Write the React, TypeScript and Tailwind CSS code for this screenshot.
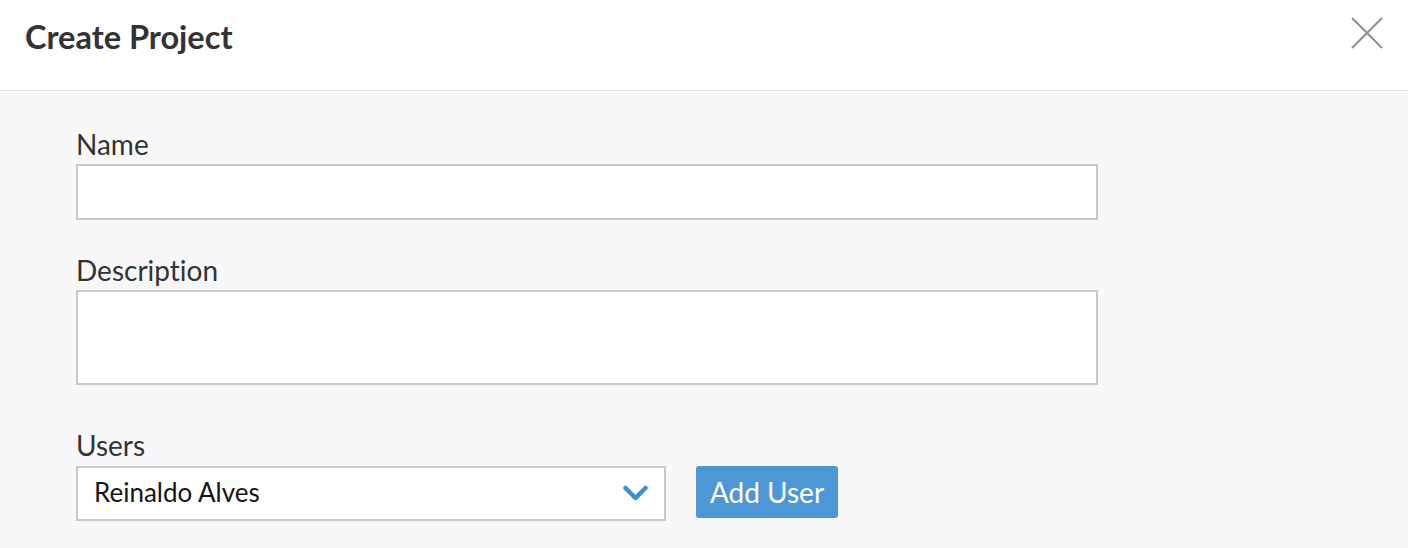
export default function App() {
  return (
    <div
      className="w-[1408px] h-[548px] overflow-hidden bg-[#f8f8fa] [font-variant-ligatures:none]"
      style={{ fontFamily: "Lato, 'Open Sans', sans-serif" }}
    >
      {/* Header */}
      <div className="h-[91px] bg-white border-b border-[#e4e4e6] flex items-start justify-between pl-[25px] pr-[25px]">
        <h1 className="mt-[18px] text-[32.5px] leading-[38px] font-bold text-[#333333]">
          Create Project
        </h1>
        <button type="button" className="mt-[17px] text-[#8e8e93]">
          <svg width="32" height="32" viewBox="0 0 32 32" fill="none">
            <path d="M1 1L31 31M31 1L1 31" stroke="currentColor" strokeWidth="2" />
          </svg>
        </button>
      </div>

      {/* Form */}
      <div className="pl-[76px] pt-[36px] w-[1098px] box-content">
        <label className="block text-[28px] leading-[34px] text-[#333333]">Name</label>
        <input
          type="text"
          className="mt-[3px] block w-[1022px] h-[56px] bg-white border-2 border-[#c9c9c9] outline-none"
        />

        <label className="mt-[33px] block text-[28px] leading-[34px] text-[#333333]">
          Description
        </label>
        <textarea className="mt-[3px] block w-[1022px] h-[95px] bg-white border-2 border-[#c9c9c9] outline-none resize-none" />

        <label className="mt-[43px] block text-[28px] leading-[34px] text-[#333333]">Users</label>
        <div className="mt-[4px] flex items-start gap-[30px]">
          <div className="w-[590px] h-[55px] bg-white border-2 border-[#c9c9c9] flex items-center justify-between pl-[16px] pr-[16px] pb-[3px]">
            <span className="text-[26px] leading-[30px] text-[#151515]">Reinaldo Alves</span>
            <svg width="25" height="17" viewBox="0 0 25 17" fill="none" className="mt-[3px]">
              <path
                d="M2.5 3L12.5 13L22.5 3"
                stroke="#3b8fd3"
                strokeWidth="4.5"
                strokeLinecap="round"
                strokeLinejoin="round"
              />
            </svg>
          </div>
          <button
            type="button"
            className="w-[142px] h-[52px] rounded-[3px] bg-[#4e97d6] text-white text-[28px] leading-[30px]"
          >
            Add User
          </button>
        </div>
      </div>
    </div>
  );
}
